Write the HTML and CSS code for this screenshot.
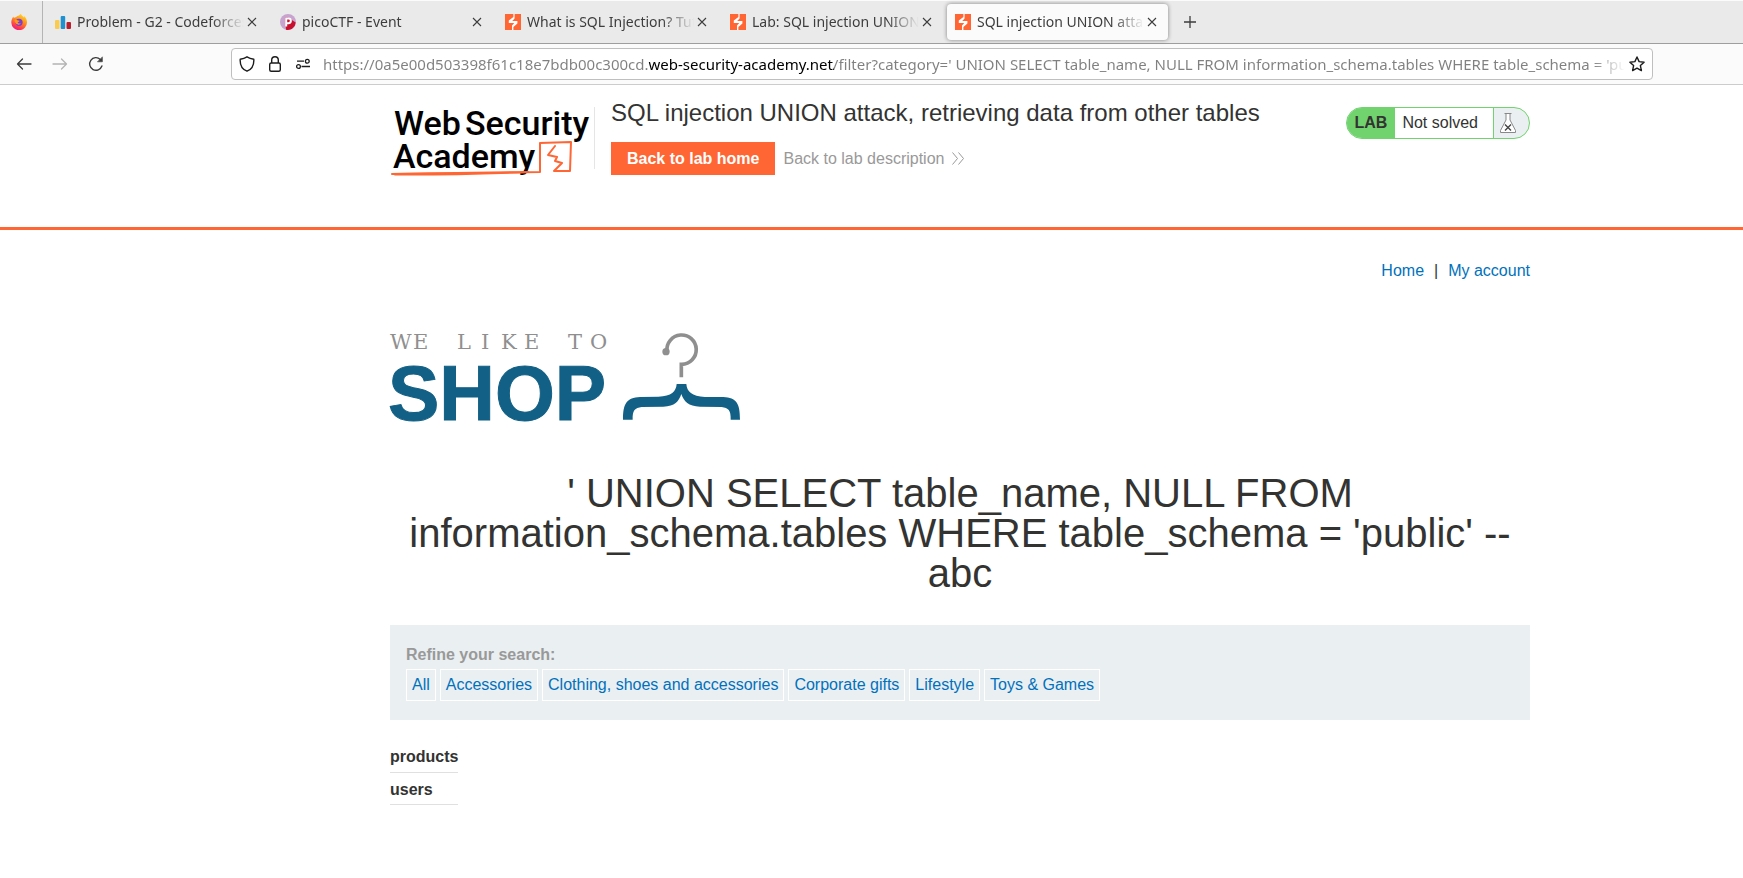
FILE: index.html
```html
<!DOCTYPE html>
<html lang="en">
<head>
<meta charset="utf-8">
<title>SQL injection UNION attack, retrieving data from other tables</title>
<link rel="stylesheet" href="styles.css">
</head>
<body>
<svg class="defs" aria-hidden="true">
  <symbol id="close" viewBox="0 0 10 10"><path d="M1 1l8 8M9 1l-8 8" fill="none" stroke="#3d3d3d" stroke-width="1.1"/></symbol>
  <symbol id="burp" viewBox="0 0 16 16"><path fill="#ff6633" d="M0 0h16v16H0z"/><path fill="#fff" d="M8.4 0h1.2v4.6L7.2 7h5.2v2.4L8.4 13v3H7v-4.6L9.3 9H3.8V6.6L8.400 3z"/></symbol>
</svg>
<header class="browser">
  <nav class="tabs" aria-label="Browser tabs">
    <button class="pinned" aria-label="Firefox View">
      <svg width="16" height="16" viewBox="0 0 16 16">
        <defs><linearGradient id="fx" x1=".8" y1="0" x2=".3" y2="1"><stop offset="0" stop-color="#ffe226"/><stop offset=".45" stop-color="#ff8a1e"/><stop offset=".8" stop-color="#ff3750"/><stop offset="1" stop-color="#e5178a"/></linearGradient></defs>
        <path fill="url(#fx)" d="M10 0c.3 1.500 2 2.300 2.800 3.400.2-.4.200-.9.100-1.300C15 3.700 16 6 16 8.200A7.800 7.800 0 0 1 .3 8.500C.3 6 1.200 4 2.400 2.500l.4 1.500c.6-.6 1.400-.8 2.200-.7C6 2.300 6.800 1.800 8 1.600 8.500.8 9.200.3 10 0z"/>
        <circle cx="8" cy="8.300" r="3.600" fill="#7a3fd0"/>
        <path fill="#ff9a1f" d="M3.500 6.200c1.300-.8 2.400-.6 3.400.2.800.1 1.600.2 1.600.6 0 .7-1.700.9-1.900 1.600.5 1 2 1.300 3.300.7-.6 1.500-3.400 2.100-5 .2-.9-1-1.300-2.200-1.400-3.300z"/>
      </svg>
    </button>
    <div class="tab">
      <svg class="fav" viewBox="0 0 16 16"><rect x="0" y="6" width="4.500" height="9" rx="1" fill="#fbcb4f"/><rect x="5.700" y="2" width="4.500" height="13" rx="1" fill="#2190cf"/><rect x="11.500" y="8" width="4.500" height="7" rx="1" fill="#b8202e"/></svg>
      <span class="tab-title">Problem - G2 - Codeforces</span>
      <button class="tab-close" aria-label="Close tab"><svg width="10" height="10"><use href="#close"/></svg></button>
    </div>
    <div class="tab">
      <svg class="fav" viewBox="0 0 16 16"><circle cx="8" cy="8" r="8" fill="#c7a3cf"/><path d="M5 3.500l3 0 7.700 5A8 8 0 0 1 6 15.700z" fill="#c8102e"/><path d="M6.200 12.500V4.500h2.300a2.200 2.200 0 0 1 0 4.700H6.200" fill="none" stroke="#fff" stroke-width="2"/></svg>
      <span class="tab-title">picoCTF - Event</span>
      <button class="tab-close" aria-label="Close tab"><svg width="10" height="10"><use href="#close"/></svg></button>
    </div>
    <div class="tab">
      <svg class="fav"><use href="#burp"/></svg>
      <span class="tab-title">What is SQL Injection? Tutorial</span>
      <button class="tab-close" aria-label="Close tab"><svg width="10" height="10"><use href="#close"/></svg></button>
    </div>
    <div class="tab">
      <svg class="fav"><use href="#burp"/></svg>
      <span class="tab-title">Lab: SQL injection UNION attack</span>
      <button class="tab-close" aria-label="Close tab"><svg width="10" height="10"><use href="#close"/></svg></button>
    </div>
    <div class="tab tab-active">
      <svg class="fav"><use href="#burp"/></svg>
      <span class="tab-title">SQL injection UNION attack</span>
      <button class="tab-close" aria-label="Close tab"><svg width="10" height="10"><use href="#close"/></svg></button>
    </div>
    <button class="new-tab" aria-label="New tab"><svg width="12" height="12" viewBox="0 0 12 12"><path d="M6 0v12M0 6h12" stroke="#3d3d3d" stroke-width="1.300"/></svg></button>
  </nav>
  <div class="toolbar">
    <div class="nav-buttons">
      <button aria-label="Back"><svg width="16" height="16" viewBox="0 0 16 16" fill="none" stroke="#3d3d3d" stroke-width="1.300" stroke-linecap="round" stroke-linejoin="round"><path d="M15 8H1.500M6.500 3l-5 5 5 5"/></svg></button>
      <button aria-label="Forward"><svg width="16" height="16" viewBox="0 0 16 16" fill="none" stroke="#b4b4b4" stroke-width="1.300" stroke-linecap="round" stroke-linejoin="round"><path d="M1 8h13.500M9.500 3l5 5-5 5"/></svg></button>
      <button aria-label="Reload"><svg width="16" height="16" viewBox="0 0 16 16" fill="none" stroke="#3d3d3d" stroke-width="1.400" stroke-linecap="round"><path d="M13.900 10A6.300 6.300 0 1 1 12.300 3.400"/><path d="M14.400 1.200v4.600H9.800z" fill="#3d3d3d" stroke-width=".6" stroke-linejoin="round"/></svg></button>
    </div>
    <div class="urlbar">
      <svg width="16" height="16" viewBox="0 0 16 16" fill="none" stroke="#1c1c1c" stroke-width="1.400" stroke-linejoin="round"><path d="M8 .8C6 2 3.500 2.800 1.200 3.200c-.3 5 1.800 10 6.800 12 5-2 7.100-7 6.800-12C12.500 2.800 10 2 8 .8z"/></svg>
      <svg width="16" height="16" viewBox="0 0 16 16" fill="none" stroke="#1c1c1c" stroke-width="1.400"><rect x="2.700" y="7" width="10.600" height="8.200" rx="1.500"/><path d="M4.700 7V4a3.300 3.300 0 0 1 6.600 0v3"/></svg>
      <svg width="16" height="16" viewBox="0 0 16 16" fill="none" stroke="#1c1c1c" stroke-width="1.300"><path d="M2 5.200h7M6.500 10.500H15"/><circle cx="12.300" cy="5.200" r="1.900"/><circle cx="3.500" cy="10.500" r="1.900"/></svg>
      <input class="url" type="text" aria-label="Address" value="https://0a5e00d503398f61c18e7bdb00c300cd.web-security-academy.net/filter?category=' UNION SELECT table_name, NULL FROM information_schema.tables WHERE table_schema = 'public' --">
      <button aria-label="Bookmark this page"><svg width="16" height="16" viewBox="0 0 16 16" fill="none" stroke="#1c1c1c" stroke-width="1.400" stroke-linejoin="round"><path d="M8 1l2.100 4.600 5 .6-3.700 3.400 1 5L8 12.100l-4.400 2.500 1-5L.9 6.200l5-.6z"/></svg></button>
    </div>
  </div>
</header>

<section class="lab-header">
  <a class="academy" href="#" aria-label="Web Security Academy">
    <svg width="205" height="80" viewBox="0 0 205 80">
      <g class="academy-text"><text x="4" y="35">Web</text><text x="75" y="35">Security</text><text x="3" y="68">Academy</text></g>
      <g fill="none" stroke="#ff6633" stroke-linejoin="round" stroke-linecap="round">
        <path stroke-width="2" d="M2 74Q50 73 150 72V43L181 42 180 71H164L172 63 165 61 167 57 158 55 165 46"/>
        <path stroke-width="2" d="M5 74.500Q60 75 138 72"/>
      </g>
    </svg>
  </a>
  <div class="lab-title">
    <h2>SQL injection UNION attack, retrieving data from other tables</h2>
    <div class="lab-links">
      <a class="button" href="#">Back to lab home</a>
      <a class="back" href="#">Back to lab description <svg width="12" height="13" viewBox="0 0 12 13" fill="none" stroke="#999"><path d="M.5.500l5 6-5 6M6.500.500l5 6-5 6"/></svg></a>
    </div>
  </div>
  <div class="status">
    <strong>LAB</strong>
    <span>Not solved</span>
    <svg width="16" height="20" viewBox="0 0 16 20"><path d="M4.500.500h7M6 .5V7L.5 17.500v2h15v-2L10 7V.5" fill="#fff" stroke="#888"/><path d="M5 11.500l6 6M11 11.500l-6 6" stroke="#444" stroke-width="1.400"/></svg>
  </div>
</section>

<main class="page">
  <nav class="account"><a href="#">Home</a><span>|</span><a href="#">My account</a></nav>
  <svg class="shop" width="352" height="90" viewBox="0 0 352 90" role="img" aria-label="We like to shop">
    <text class="tagline" y="17" x="0 23 67 91 111 134 178 200">WELIKETO</text>
    <text class="brand" x="-2" y="88">SHOP</text>
    <g transform="scale(.33333) translate(-30 -36)">
      <path d="M861 94A44 44 0 1 1 905 133H904V172" fill="none" stroke="#8f8f8f" stroke-width="11"/>
      <circle cx="858" cy="95" r="11" fill="#8f8f8f"/>
      <path fill="#126085" d="M890 192H919C921 215 935 228 975 231L1030 231C1070 233 1080 250 1080 299H1052C1053 270 1045 264 1025 261L960 260C925 258 912 245 904 222C896 245 885 258 850 260L785 261C765 264 757 270 758 299H729C729 250 740 233 780 231L835 230C875 228 888 215 890 192Z"/>
    </g>
  </svg>
  <h1>' UNION SELECT table_name, NULL FROM information_schema.tables WHERE table_schema = 'public' -- abc</h1>
  <section class="filters">
    <strong class="filter-title">Refine your search:</strong>
    <div class="filter-list">
      <a href="#">All</a>
      <a href="#">Accessories</a>
      <a href="#">Clothing, shoes and accessories</a>
      <a href="#">Corporate gifts</a>
      <a href="#">Lifestyle</a>
      <a href="#">Toys &amp; Games</a>
    </div>
  </section>
  <table class="results">
    <tbody>
      <tr><th scope="row">products</th></tr>
      <tr><th scope="row">users</th></tr>
    </tbody>
  </table>
</main>
</body>
</html>
```
FILE: styles.css
```css
* { box-sizing: border-box; }
body {
  margin: 0;
  background: #fff;
  color: #333332;
  font: 16px/24px "Liberation Sans", Arial, sans-serif;
}
a { color: #0071bd; text-decoration: none; }
svg { display: block; flex: none; }
button { border: 0; padding: 0; background: none; display: flex; align-items: center; justify-content: center; }
.defs { position: absolute; width: 0; height: 0; }

.browser { font-family: "Noto Sans", "Open Sans", sans-serif; color: #3d3d3d; }
.tabs {
  display: flex;
  align-items: center;
  gap: 4px;
  height: 44px;
  background: #eaeaea;
  border-top: 1px solid #fbfbfb;
  border-bottom: 1px solid #9e9e9e;
}
.pinned { width: 43px; height: 100%; padding-right: 4px; border-right: 1px solid #b4b4b4; }
.tab {
  display: flex;
  align-items: center;
  width: 221px;
  height: 36px;
  padding: 0 8px;
  border-radius: 4px;
}
.tab-active { background: #fbfbfb; box-shadow: 0 0 4px rgba(0, 0, 0, .45); }
.fav { width: 16px; height: 16px; margin-right: 6px; }
.tab-title {
  flex: 1;
  min-width: 0;
  overflow: hidden;
  white-space: nowrap;
  font-size: 14px;
  line-height: 20px;
  mask-image: linear-gradient(to left, transparent, #000 32px);
}
.tab-close { width: 16px; height: 20px; }
.new-tab { width: 36px; height: 36px; }

.toolbar {
  display: flex;
  align-items: center;
  height: 41px;
  padding: 0 90px 0 16px;
  background: #fbfbfb;
  border-bottom: 1px solid #ccc;
}
.nav-buttons { display: flex; gap: 20px; width: 215px; }
.urlbar {
  flex: 1;
  display: flex;
  align-items: center;
  gap: 12px;
  height: 32px;
  padding: 0 7px;
  background: #fff;
  border: 1px solid #bfbfbf;
  border-radius: 4px;
}
.url {
  flex: 1;
  min-width: 0;
  margin-right: -8px;
  padding: 0;
  border: 0;
  font: 15px/22px "Noto Sans", "Open Sans", sans-serif;
  color: transparent;
  background: linear-gradient(to right, #808080 326px, #000 326px, #000 511px, #808080 511px, #808080 calc(100% - 32px), transparent);
  background-clip: text;
}

.lab-header {
  display: flex;
  align-items: flex-start;
  height: 145px;
  padding: 15px 213px 0 390px;
  border-bottom: 3px solid #ff6633;
}
.academy-text { font: 500 34px Roboto, sans-serif; fill: #000; }
.lab-title { flex: 1; display: flex; flex-direction: column; gap: 16px; margin-left: 16px; }
.lab-title h2 { margin: 0; font-size: 24px; line-height: 26px; font-weight: 400; }
.academy { background: linear-gradient(#e5e5e5, #e5e5e5) no-repeat right 7px / 1px 62px; }
.lab-links { display: flex; align-items: center; gap: 8px; }
.button {
  padding: 0 16px;
  background: #ff6633;
  color: #fff;
  font-weight: 700;
  line-height: 33px;
}
.back { display: flex; align-items: center; gap: 8px; color: #999; }
.status {
  display: flex;
  align-items: center;
  height: 32px;
  margin-top: 7px;
  padding-right: 13px;
  border: 1px solid #71d36e;
  border-radius: 16px;
  background: #eaeff2;
  overflow: hidden;
}
.status strong { padding: 0 8px; background: #71d36e; line-height: 32px; }
.status span { padding: 0 15px 0 7px; margin-right: 6px; background: #fff; border-right: 1px solid #71d36e; line-height: 32px; }

.page { padding: 29px 213px 0 390px; }
.account { display: flex; justify-content: flex-end; gap: 10px; color: #333332; }
.shop { margin-top: 49px; overflow: visible; }
.tagline { font: 21px "DejaVu Serif", serif; fill: #8f8f8f; }
.brand { font: 700 77px "Liberation Sans", Arial, sans-serif; fill: #126085; stroke: #126085; stroke-width: 1px; }
h1 { margin: 51px 0 32px; font-size: 40px; line-height: 40px; font-weight: 400; text-align: center; }
.filters { padding: 16px 16px 19px; background: #eaeff2; }
.filter-title { display: block; line-height: 28px; color: #999; }
.filter-list { display: flex; flex-wrap: wrap; gap: 4px; }
.filter-list a { padding: 0 5px; border: 1px solid #fff; line-height: 30px; }
.results { margin-top: 20px; border-collapse: collapse; }
.results th { padding: 3px 0 0; height: 32px; text-align: left; border-bottom: 1px solid #e0e0e0; }
```
